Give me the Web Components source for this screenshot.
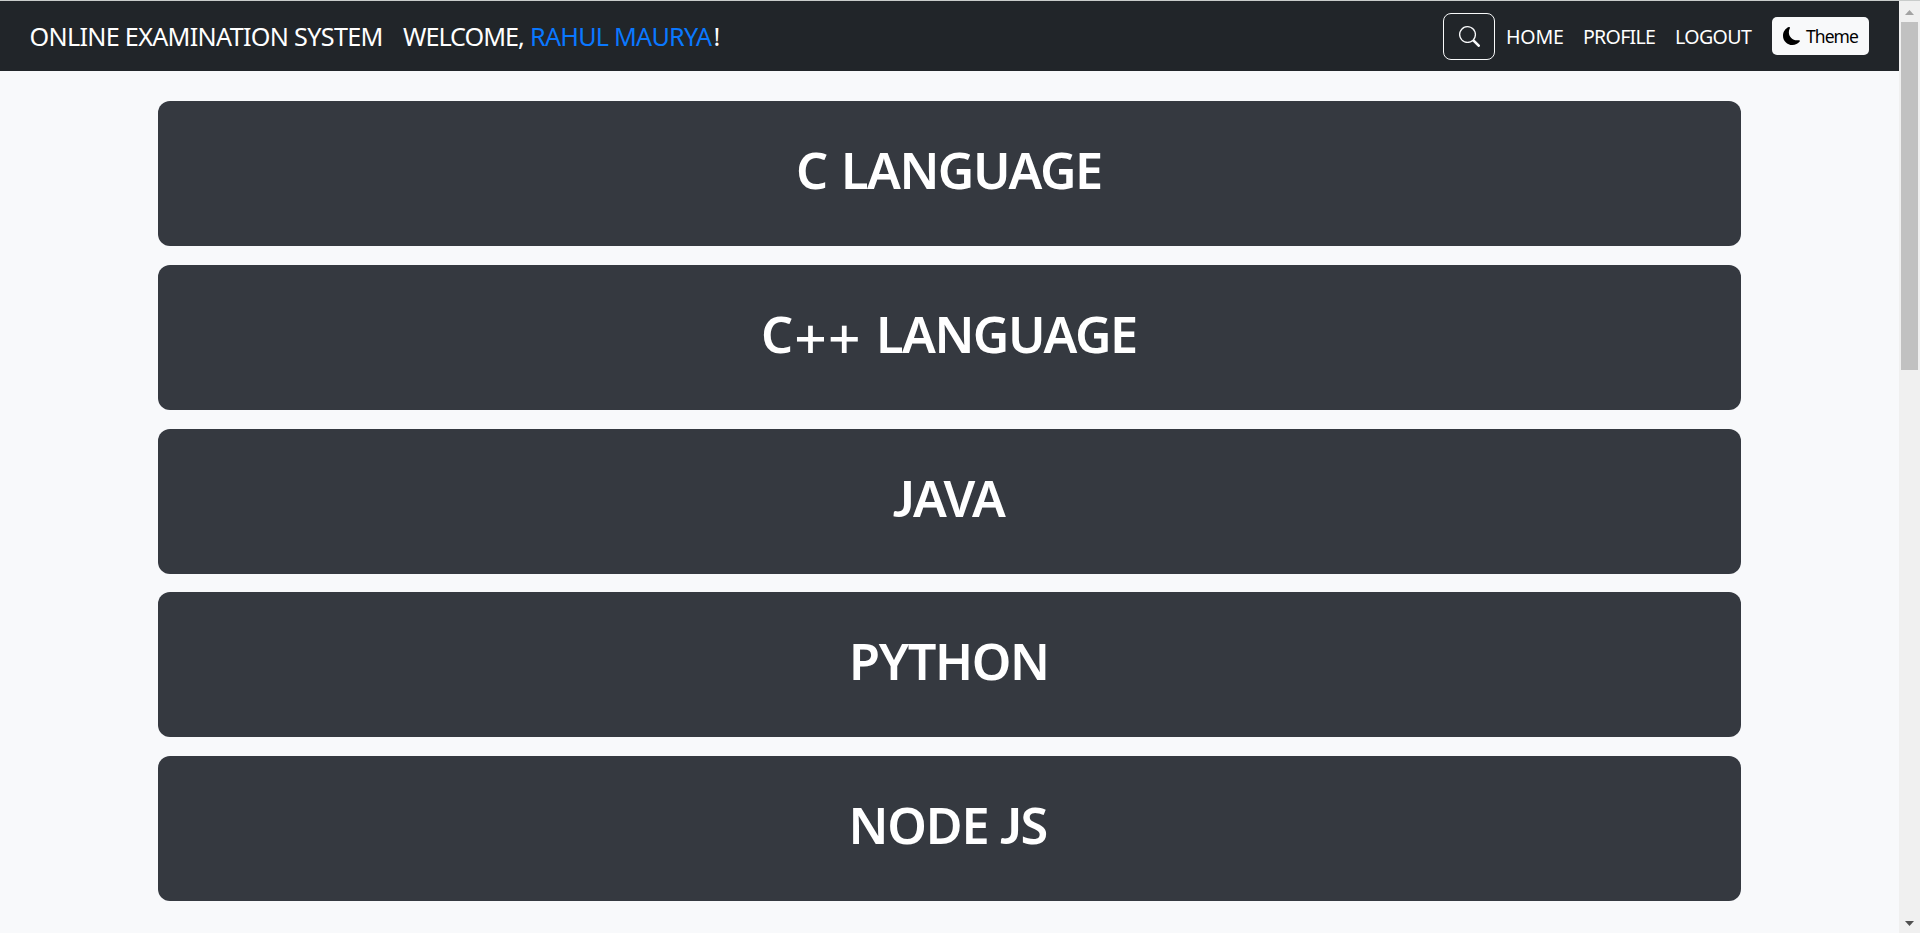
<!DOCTYPE html>
<html lang="en">
<head>
<meta charset="utf-8">
<title>Online Examination System</title>
<style>
html,body{margin:0;height:100%;overflow:hidden;background:#f8f9fb;font-family:"Noto Sans","Open Sans",sans-serif}
</style>
</head>
<body>
<exam-app></exam-app>
<script>
const define=(name,html,setup)=>customElements.define(name,class extends HTMLElement{
  connectedCallback(){
    if(this.shadowRoot)return;
    const t=document.createElement('template');t.innerHTML=html;
    this.attachShadow({mode:'open'}).append(t.content.cloneNode(true));
    if(setup)setup(this,this.shadowRoot);
  }
});

// Label whose glyphs span exactly the given width; letter spacing takes up the difference.
// Child elements may use a font of their own.
const pen=document.createElement('canvas').getContext('2d');
define('fit-label','<style>:host{display:block;flex:none;white-space:pre}span{display:block;width:max-content}</style><span><slot></slot></span>',(el,root)=>{
  const w=+el.getAttribute('w'),span=root.querySelector('span');
  const runs=[...el.childNodes].map(n=>{
    const cs=getComputedStyle(n.nodeType===1?n:el);
    pen.font=`${cs.fontWeight} ${cs.fontSize} ${cs.fontFamily}`;
    return pen.measureText(n.textContent);
  });
  const first=runs[0],last=runs[runs.length-1];
  const ink=runs.reduce((s,m)=>s+m.width,0)+first.actualBoundingBoxLeft-(last.width-last.actualBoundingBoxRight);
  const n=el.textContent.length;
  el.style.width=w+'px';
  if(n>1)span.style.letterSpacing=(w-ink)/(n-1)+'px';
  span.style.marginLeft=first.actualBoundingBoxLeft+'px';
});

define('search-button',`<style>
:host{display:block}
button{box-sizing:border-box;width:52px;height:47px;border:1px solid #f8f9fa;border-radius:8px;background:none;color:#f8f9fa;padding:0 0 0 1px;display:grid;place-items:center}
svg{display:block}
</style><button aria-label="Search"><svg width="21" height="21" viewBox="0 0 16 16" fill="currentColor"><path d="M11.742 10.344a6.5 6.5 0 1 0-1.397 1.398h-.001c.03.04.062.078.098.115l3.85 3.85a1 1 0 0 0 1.415-1.414l-3.85-3.85a1.007 1.007 0 0 0-.115-.1zM12 6.5a5.5 5.5 0 1 1-11 0 5.5 5.5 0 0 1 11 0z"/></svg></button>`);

define('theme-button',`<style>
:host{display:block}
button{box-sizing:border-box;width:97px;height:38px;border:0;border-radius:5px;background:#f8f9fa;color:#000;padding:0 0 1px 11px;display:flex;align-items:center;gap:5px;font:400 17.5px/27px "Noto Sans",sans-serif}
svg{display:block;flex:none}
fit-label{padding-top:2px}
</style><button><svg width="18" height="18" viewBox="0 0 16 16" fill="currentColor"><path d="M6 .278a.768.768 0 0 1 .08.858 7.208 7.208 0 0 0-.878 3.46c0 4.021 3.278 7.277 7.318 7.277.527 0 1.04-.055 1.533-.16a.787.787 0 0 1 .81.316.733.733 0 0 1-.031.893A8.349 8.349 0 0 1 8.344 16C3.734 16 0 12.286 0 7.71 0 4.266 2.114 1.312 5.124.06A.752.752 0 0 1 6 .278z"/></svg><fit-label w="52">Theme</fit-label></button>`);

define('nav-bar',`<style>
:host{display:flex;box-sizing:border-box;height:71px;border-top:1px solid #c9cccb;background:#212529;color:#fff;padding:0 30px 0 30.5px;justify-content:space-between;align-items:center}
.brand,.links{display:flex;align-items:center}
.brand{font-size:25.2px;line-height:38px;padding-bottom:1px}
.brand .hi{margin-left:21.5px}
.name{color:#0a78ff;margin-left:9px}
.bang{margin-left:1.5px}
.links{font-size:19.6px;line-height:30px}
.links fit-label{padding-top:2px}
search-button{margin-right:12px}
.gap{margin-right:21px}
.last{margin-right:20px}
</style>
<div class="brand"><fit-label w="351">ONLINE EXAMINATION SYSTEM</fit-label><fit-label class="hi" w="120">WELCOME,</fit-label><fit-label class="name" w="181">RAHUL MAURYA</fit-label><fit-label class="bang" w="4">!</fit-label></div>
<div class="links"><search-button></search-button><fit-label class="gap" w="56">HOME</fit-label><fit-label class="gap" w="71">PROFILE</fit-label><fit-label w="76" class="last">LOGOUT</fit-label><theme-button></theme-button></div>`);

define('subject-card',`<style>
:host{display:flex;box-sizing:border-box;height:145px;border-radius:12px;background:#353940;color:#fff;justify-content:center;align-items:flex-start;padding-top:36px;font-size:50.4px;line-height:66px;font-weight:600}
</style><slot></slot>`);

define('scroll-rail',`<style>
:host{display:flex;flex-direction:column;box-sizing:border-box;width:21px;height:100%;background:#f0f0f0;border-top:1px solid #c9cccb;align-items:center;padding:9px 1px 7px 0}
svg{display:block;flex:none}
.thumb{width:17px;height:348px;background:#c1c1c1;margin:7px 0 auto 1px}
</style><svg width="9" height="5"><path d="M0 5 4.5 0 9 5z" fill="#a3a3a3"/></svg><div class="thumb"></div><svg width="9" height="5"><path d="M0 0h9L4.5 5z" fill="#505050"/></svg>`);

define('exam-app',`<style>
:host{display:grid;grid-template-columns:1fr 21px;height:933px}
main{display:grid;grid-auto-rows:145px;row-gap:18.75px;padding:30px 158px 0}
.c{margin-right:19px}
.cpp{margin-right:22px}
.j{font-family:Lato,sans-serif;font-weight:700;font-size:50px;line-height:1}
.p{font-weight:500;font-size:57px;line-height:0;vertical-align:-6px}
</style>
<div><nav-bar></nav-bar><main>
<subject-card><fit-label class="c" w="28">C</fit-label><fit-label w="256">LANGUAGE</fit-label></subject-card>
<subject-card><fit-label class="cpp" w="95">C<span class="p">++</span></fit-label><fit-label w="256">LANGUAGE</fit-label></subject-card>
<subject-card><fit-label w="113"><span class="j">J</span>AVA</fit-label></subject-card>
<subject-card><fit-label w="193">PYTHON</fit-label></subject-card>
<subject-card><fit-label w="194">NODE <span class="j">J</span>S</fit-label></subject-card>
</main></div><scroll-rail></scroll-rail>`);
</script>
</body>
</html>
